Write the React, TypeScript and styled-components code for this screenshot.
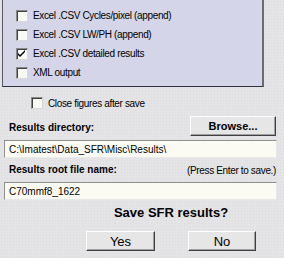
import React, { FC, useState } from "react";
import styled, { createGlobalStyle } from "styled-components";

const GlobalStyle = createGlobalStyle`
    html, body {
        margin: 0;
        padding: 0;
        background: #e4e4e6;
    }
    body {
        font-family: "Liberation Sans", Arial, sans-serif;
        font-size: 10px;
        letter-spacing: -0.35px;
        color: #000;
    }
`;

const Page = styled.div`
    width: 284px;
    height: 258px;
    overflow: hidden;
    box-sizing: border-box;
    background-color: #e4e4e6;
    background-image: radial-gradient(#dcdcdf 0.6px, transparent 0.7px);
    background-size: 3px 3px;
    display: flex;
    flex-direction: column;
`;

const OptionsPanel = styled.div`
    margin-left: 2px;
    width: 262px;
    height: 87px;
    box-sizing: border-box;
    background: #d5d5e9;
    border-left: 1px solid #5a5a64;
    border-bottom: 1px solid #30303a;
    border-right: 2px solid #6a6a70;
    padding: 6px 0 0 13px;
    display: flex;
    flex-direction: column;
`;

const CheckRow = styled.label<{ $indent?: number; $height?: number }>`
    display: flex;
    align-items: center;
    height: ${(p) => p.$height ?? 19}px;
    padding-left: ${(p) => p.$indent ?? 0}px;
    gap: 5px;
    white-space: nowrap;
    cursor: default;
`;

const Box = styled.span<{ $checked: boolean }>`
    width: 10px;
    height: 10px;
    flex: none;
    background: #fafaf4;
    border-top: 1px solid #8a8a8a;
    border-left: 1px solid #8a8a8a;
    border-bottom: 1px solid #d8d8d8;
    border-right: 1px solid #d8d8d8;
    box-shadow: inset 1px 1px 0 #404040;
    display: flex;
    align-items: center;
    justify-content: center;
`;

const Body = styled.div`
    padding: 9px 8px 0 4px;
    display: flex;
    flex-direction: column;
`;

const LabelRow = styled.div<{ $height: number }>`
    height: ${(p) => p.$height}px;
    display: flex;
    align-items: flex-end;
    justify-content: space-between;
`;

const BoldLabel = styled.span`
    font-weight: bold;
    letter-spacing: 0;
    padding-left: 5px;
    padding-bottom: 3px;
`;

const Hint = styled.span`
    padding-bottom: 2px;
`;

const PushButton = styled.button<{ $width: number }>`
    width: ${(p) => p.$width}px;
    height: 20px;
    padding: 0;
    font-family: "Liberation Sans", Arial, sans-serif;
    letter-spacing: 0;
    background: #e6e6e6;
    border-top: 1px solid #ffffff;
    border-left: 1px solid #ffffff;
    border-right: 1px solid #404040;
    border-bottom: 1px solid #404040;
    box-shadow: inset -1px -1px 0 #a0a0a0;
    color: #000;
    cursor: default;
`;

const BrowseButton = styled(PushButton)`
    font-weight: bold;
    font-size: 11px;
`;

const DialogButton = styled(PushButton)`
    font-size: 13px;
`;

const TextField = styled.input`
    width: 273px;
    height: 18px;
    margin-top: 4px;
    box-sizing: border-box;
    padding: 0 0 0 4px;
    font-family: "Liberation Sans", Arial, sans-serif;
    font-size: 10px;
    letter-spacing: 0;
    background: #fbfbf3;
    border-top: 1px solid #909090;
    border-left: 1px solid #909090;
    border-right: 1px solid #e8e8e8;
    border-bottom: 1px solid #e8e8e8;
    outline: none;
`;

const Footer = styled.div`
    margin-left: 82px;
    width: 170px;
    display: flex;
    flex-direction: column;
    align-items: center;
`;

const Question = styled.div`
    font-size: 13px;
    font-weight: bold;
    letter-spacing: 0;
    margin-top: 5px;
    height: 17px;
`;

const ButtonRow = styled.div`
    display: flex;
    width: 100%;
    justify-content: space-between;
    margin-top: 9px;
`;

const Check: FC<{ checked: boolean }> = ({ checked }) => (
    <Box $checked={checked}>
        {checked && (
            <svg width="8" height="8" viewBox="0 0 8 8">
                <path d="M0 3 L2 5 L7 0 L7 2 L2 7 L0 5 Z" fill="#000" />
            </svg>
        )}
    </Box>
);

const options = [
    "Excel .CSV Cycles/pixel (append)",
    "Excel .CSV LW/PH (append)",
    "Excel .CSV detailed results",
    "XML output",
];

const App: FC = () => {
    const [checked, setChecked] = useState([false, false, true, false]);
    const [closeFigures, setCloseFigures] = useState(false);

    const toggle = (i: number) =>
        setChecked((c) => c.map((v, j) => (j === i ? !v : v)));

    return (
        <Page>
            <GlobalStyle />
            <OptionsPanel>
                {options.map((label, i) => (
                    <CheckRow key={label} onClick={() => toggle(i)}>
                        <Check checked={checked[i]} />
                        <span>{label}</span>
                    </CheckRow>
                ))}
            </OptionsPanel>
            <Body>
                <CheckRow
                    $indent={27}
                    $height={14}
                    onClick={() => setCloseFigures(!closeFigures)}
                >
                    <Check checked={closeFigures} />
                    <span>Close figures after save</span>
                </CheckRow>
                <LabelRow $height={26}>
                    <BoldLabel>Results directory:</BoldLabel>
                    <BrowseButton $width={86}>Browse...</BrowseButton>
                </LabelRow>
                <TextField defaultValue="C:\Imatest\Data_SFR\Misc\Results\" />
                <LabelRow $height={20}>
                    <BoldLabel>Results root file name:</BoldLabel>
                    <Hint>(Press Enter to save.)</Hint>
                </LabelRow>
                <TextField defaultValue="C70mmf8_1622" />
                <Footer>
                    <Question>Save SFR results?</Question>
                    <ButtonRow>
                        <DialogButton $width={69}>Yes</DialogButton>
                        <DialogButton $width={68}>No</DialogButton>
                    </ButtonRow>
                </Footer>
            </Body>
        </Page>
    );
};

export default App;
